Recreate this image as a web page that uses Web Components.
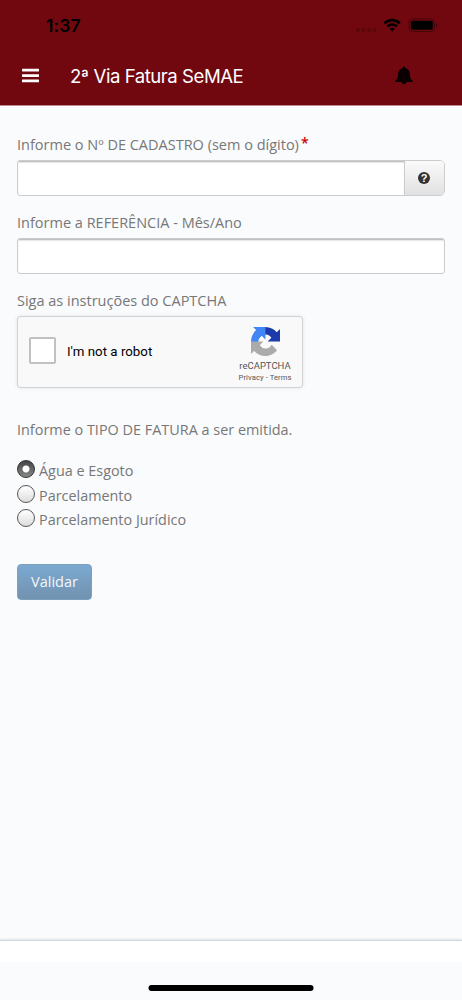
<!DOCTYPE html>
<html lang="pt-BR">
<head>
<meta charset="utf-8">
<title>2ª Via Fatura SeMAE</title>
<style>
html,body{margin:0;height:100%;background:#fafbfd;overflow:hidden}
</style>
</head>
<body>
<app-screen></app-screen>
<script>
const define = (name, html) => customElements.define(name, class extends HTMLElement {
  constructor() {
    super();
    const t = document.createElement('template');
    t.innerHTML = html;
    this.attachShadow({mode: 'open'}).append(t.content.cloneNode(true));
  }
});

define('status-bar', `<style>
:host{display:flex;height:50px;box-sizing:border-box;padding:0 24px 0 46px;align-items:center;justify-content:space-between;color:#000;font:600 17.6px/50px Inter,sans-serif}
.time{letter-spacing:.1px;padding-top:1px}
svg{display:block}
</style>
<span class="time">1:37</span>
<svg width="84" height="16" viewBox="0 0 84 16">
<g fill="#000" opacity=".2"><circle cx="4" cy="13" r="2"/><circle cx="9.5" cy="13" r="2"/><circle cx="15" cy="13" r="2"/><circle cx="20.500" cy="13" r="2"/></g>
<g fill="none" stroke="#000" stroke-width="2.6"><path d="M30.500 6.300a10.900 10.900 0 0 1 15.400 0"/><path d="M33.500 9.500a6.700 6.700 0 0 1 9.400 0"/></g>
<path d="M38.200 14.600l-2.600-2.600a3.800 3.800 0 0 1 5.200 0z"/>
<rect x="55" y="2" width="25.400" height="12.600" rx="3.600" fill="none" stroke="#000" opacity=".38"/>
<rect x="56.800" y="3.800" width="22" height="9" rx="1.800"/><path d="M81.900 6v4.400c1.600-.7 1.600-3.700 0-4.400z" opacity=".5"/></svg>`);

define('nav-bar', `<style>
:host{display:flex;align-items:center;height:51px;padding:0 48px 4px 22px;color:#fff;font:400 18.600px/50px Inter,sans-serif}
.menu{width:17px;margin-right:31px}
.title{flex:1;letter-spacing:-.47px;white-space:nowrap}
svg{display:block}
</style>
<svg class="menu" width="17" height="15" viewBox="0 0 17 15" fill="#fff"><rect y=".8" width="17" height="2.700" rx=".4"/><rect y="6.200" width="17" height="2.700" rx=".4"/><rect y="11.600" width="17" height="2.700" rx=".4"/></svg>
<span class="title"><slot></slot></span>
<svg width="20" height="20" viewBox="0 0 20 20"><path fill="#0b0001" d="M10 .5c.8 0 1.300.5 1.200 1.500 3 .6 4.600 2.800 4.700 5.800.1 4 1 6 2.900 7.100v1.200h-6.100a2.800 2.800 0 0 1-5.400 0H1.200v-1.200c1.900-1.100 2.800-3.100 2.900-7.100.1-3 1.700-5.200 4.700-5.800C8.700 1 9.200.5 10 .5z"/></svg>`);

define('field-label', `<style>
:host{display:block;height:22px;font:14.500px/22px "Open Sans",sans-serif;color:#777;white-space:nowrap}
sup{display:none;color:#c00;line-height:0;font-size:14px;font-weight:600;margin-left:2px;vertical-align:2px}
:host([required]) sup{display:inline}
</style><slot></slot><sup>*</sup>`);

define('text-field', `<style>
:host{display:flex;height:36px;box-sizing:border-box;border:1px solid #ccc;border-radius:3px;background:#fff;overflow:hidden}
.in{flex:1;box-shadow:inset 0 2px 2px -1px #aaa}
::slotted(*){border-left:1px solid #ccc}
:host([addon]){border-radius:3px 5px 5px 3px}
</style><div class="in"></div><slot></slot>`);

define('help-button', `<style>
:host{display:flex;width:39px;align-items:center;justify-content:center;background:linear-gradient(#fafafa,#e1e1e1)}
.q{width:12.500px;height:12.500px;margin-right:1px;border-radius:50%;background:#333;color:#fff;font:bold 11px/13px "Liberation Sans",sans-serif;text-align:center}
</style><span class="q">?</span>`);

define('captcha-box', `<style>
:host{display:flex;box-sizing:border-box;width:286px;height:72px;border:1px solid #d3d3d3;border-radius:3px;background:#f9f9f9;box-shadow:0 0 4px rgba(0,0,0,.09);align-items:center;font-family:Roboto,sans-serif;color:#000}
.box{box-sizing:border-box;width:27px;height:27px;margin:0 11px 3px 11px;border:2px solid #c1c1c1;border-radius:2px;background:#fff}
.t{flex:1;font-size:13.300px;line-height:20px;white-space:nowrap}
.brand{width:74px;display:flex;flex-direction:column;align-items:center;color:#555;white-space:nowrap;padding-top:6px}
.n{font-size:9.500px;line-height:12px;margin-top:4px}
.p{font-size:7.600px;line-height:12px;letter-spacing:.08px}
svg{display:block}
</style><span class="box"></span><span class="t">I'm not a robot</span>
<div class="brand"><svg width="29" height="29" viewBox="0 0 64 64"><path fill="#1c3aa9" d="M64 31.955l-.033-1.370V4.687l-7.160 7.160C50.948 4.674 42.033.093 32.050.093c-10.400 0-19.622 4.960-25.458 12.640l11.736 11.860a15.550 15.550 0 0 1 4.754-5.334c2.050-1.600 4.952-2.906 8.968-2.906.485 0 .860.057 1.135.163 4.976.393 9.288 3.140 11.828 7.124l-8.307 8.307L64 31.953"/><path fill="#4285f4" d="M31.862.094l-1.370.033H4.594l7.160 7.160C4.580 13.147 0 22.060 0 32.046c0 10.400 4.960 19.622 12.640 25.458L24.500 45.768a15.550 15.550 0 0 1-5.334-4.754c-1.600-2.050-2.906-4.952-2.906-8.968 0-.485.057-.860.163-1.135.393-4.976 3.140-9.288 7.124-11.828l8.307 8.307L31.860.095"/><path fill="#ababab" d="M.001 32.045l.033 1.370v25.898l7.160-7.160c5.860 7.173 14.774 11.754 24.760 11.754 10.400 0 19.622-4.960 25.458-12.640l-11.736-11.860a15.550 15.550 0 0 1-4.754 5.334c-2.050 1.600-4.952 2.906-8.968 2.906-.485 0-.860-.057-1.135-.163-4.976-.393-9.288-3.140-11.828-7.124l8.307-8.307c-10.522.040-22.400.066-27.295-.005"/></svg>
<span class="n">reCAPTCHA</span><span class="p">Privacy - Terms</span></div>`);

define('radio-option', `<style>
:host{display:flex;height:24.500px;gap:4px;font:14.400px/22px "Open Sans",sans-serif;color:#777;white-space:nowrap}
i{box-sizing:border-box;width:18px;height:18px;border:1.300px solid #555;border-radius:50%;background:linear-gradient(#fff,#ddd)}
:host([checked]) i{border-color:#333;background:radial-gradient(circle,#fff 3px,transparent 4px),linear-gradient(#444,#888)}
</style><i></i><span><slot></slot></span>`);

define('submit-button', `<style>
:host{display:block;box-sizing:border-box;width:75px;height:36px;border:1px solid #7aa0c0;border-radius:4px;background:linear-gradient(#7ba9d0,#7292b0);color:#f3f7fa;font:14.500px/34px "Open Sans",sans-serif;text-align:center}
</style><slot></slot>`);

define('home-bar', `<style>
:host{display:block;height:60px}
.w{height:21px;border-top:1px solid #ced8e0;background:#fff;box-shadow:0 -1px 2px rgba(0,0,0,.1)}
.h{width:165px;height:6px;border-radius:3px;background:#000;margin:23px auto 0;transform:translateX(-.5px)}
</style><div class="w"></div><div class="h"></div>`);

define('app-screen', `<style>
:host{display:flex;flex-direction:column;width:462px;height:1000px;background:#fafbfd}
header{height:105px;background:#71080f;border-bottom:1px solid #bd8a8f}
main{flex:1;padding:28px 17px 0}
text-field{margin:4px 0 16px}
captcha-box{margin:4px 0 31px}
.type{font-size:14.430px}
.radios{margin-top:19px}
submit-button{margin-top:30px}
</style>
<header><status-bar></status-bar><nav-bar>2ª Via Fatura SeMAE</nav-bar></header>
<main>
<field-label required>Informe o Nº DE CADASTRO (sem o dígito)</field-label>
<text-field addon><help-button></help-button></text-field>
<field-label>Informe a REFERÊNCIA - Mês/Ano</field-label>
<text-field></text-field>
<field-label>Siga as instruções do CAPTCHA</field-label>
<captcha-box></captcha-box>
<field-label class="type">Informe o TIPO DE FATURA a ser emitida.</field-label>
<div class="radios"><radio-option checked>Água e Esgoto</radio-option><radio-option>Parcelamento</radio-option><radio-option>Parcelamento Jurídico</radio-option></div>
<submit-button>Validar</submit-button>
</main>
<home-bar></home-bar>`);
</script>
</body>
</html>
